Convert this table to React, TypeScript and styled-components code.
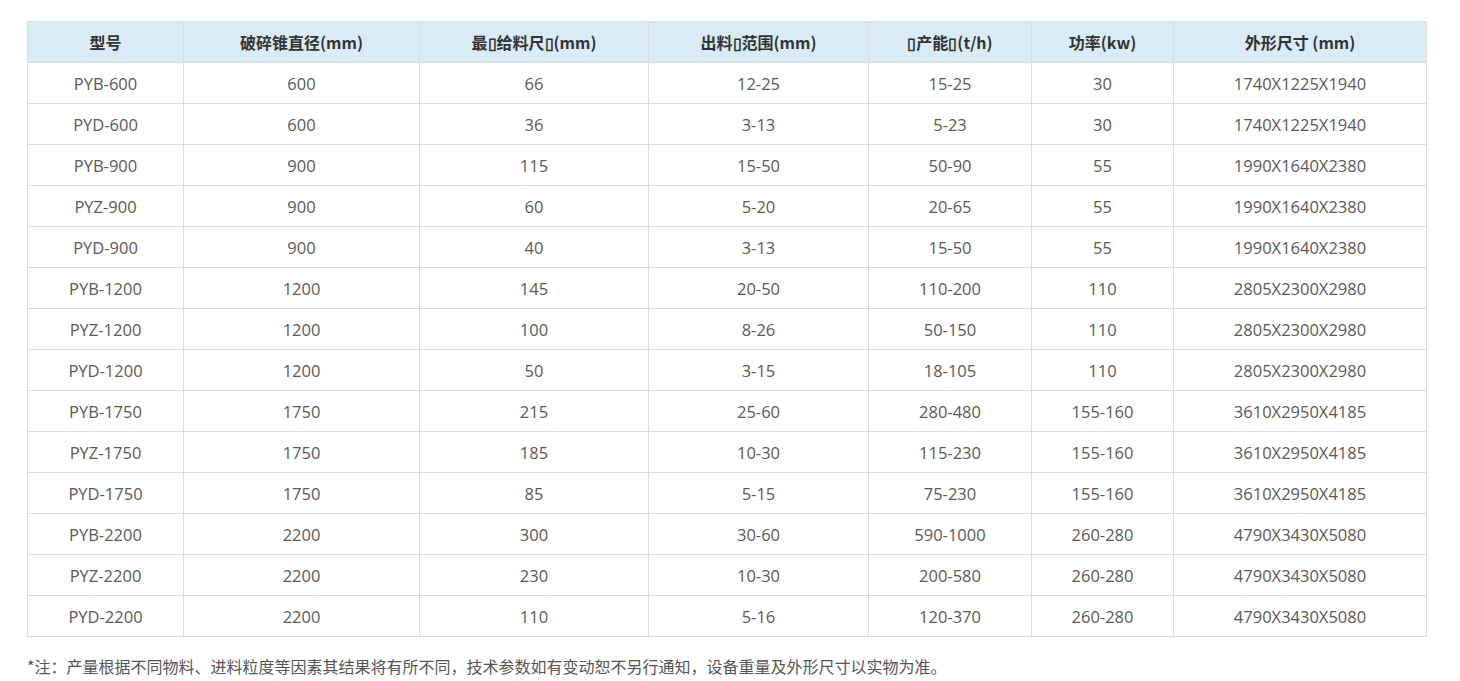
import styled, { createGlobalStyle } from 'styled-components';

const GlobalStyle = createGlobalStyle`
  html, body {
    margin: 0;
    padding: 0;
    background: #fff;
  }
`;

const TOFU = '\u25AF';

const columns = [
  { title: '型号', width: 156 },
  { title: '破碎锥直径(mm)', width: 236 },
  { title: `最${TOFU}给料尺${TOFU}(mm)`, width: 229 },
  { title: `出料${TOFU}范围(mm)`, width: 220 },
  { title: `${TOFU}产能${TOFU}(t/h)`, width: 163 },
  { title: '功率(kw)', width: 142 },
  { title: '外形尺寸 (mm)', width: 253 },
];

const rows = [
  ['PYB-600', '600', '66', '12-25', '15-25', '30', '1740X1225X1940'],
  ['PYD-600', '600', '36', '3-13', '5-23', '30', '1740X1225X1940'],
  ['PYB-900', '900', '115', '15-50', '50-90', '55', '1990X1640X2380'],
  ['PYZ-900', '900', '60', '5-20', '20-65', '55', '1990X1640X2380'],
  ['PYD-900', '900', '40', '3-13', '15-50', '55', '1990X1640X2380'],
  ['PYB-1200', '1200', '145', '20-50', '110-200', '110', '2805X2300X2980'],
  ['PYZ-1200', '1200', '100', '8-26', '50-150', '110', '2805X2300X2980'],
  ['PYD-1200', '1200', '50', '3-15', '18-105', '110', '2805X2300X2980'],
  ['PYB-1750', '1750', '215', '25-60', '280-480', '155-160', '3610X2950X4185'],
  ['PYZ-1750', '1750', '185', '10-30', '115-230', '155-160', '3610X2950X4185'],
  ['PYD-1750', '1750', '85', '5-15', '75-230', '155-160', '3610X2950X4185'],
  ['PYB-2200', '2200', '300', '30-60', '590-1000', '260-280', '4790X3430X5080'],
  ['PYZ-2200', '2200', '230', '10-30', '200-580', '260-280', '4790X3430X5080'],
  ['PYD-2200', '2200', '110', '5-16', '120-370', '260-280', '4790X3430X5080'],
];

export default function App() {
  return (
    <Page>
      <GlobalStyle />
      <Table>
        <colgroup>
          {columns.map((c) => (
            <col key={c.title} style={{ width: c.width }} />
          ))}
        </colgroup>
        <thead>
          <tr>
            {columns.map((c) => (
              <HeadCell key={c.title}>{c.title}</HeadCell>
            ))}
          </tr>
        </thead>
        <tbody>
          {rows.map((r) => (
            <tr key={r[0]}>
              {r.map((v, i) => (
                <Cell key={i}>{v}</Cell>
              ))}
            </tr>
          ))}
        </tbody>
      </Table>
      <Note>*注：产量根据不同物料、进料粒度等因素其结果将有所不同，技术参数如有变动恕不另行通知，设备重量及外形尺寸以实物为准。</Note>
    </Page>
  );
}

/* STYLES */
const Page = styled.div`
  padding: 21px 0 0 27px;
  width: 1400px;
`;

const Table = styled.table`
  width: 1400px;
  border-collapse: collapse;
  table-layout: fixed;
`;

const HeadCell = styled.th`
  height: 40px;
  padding: 0;
  background: #d9ebf5;
  border: 1px solid #dcdcdc;
  color: #333;
  font-family: 'Noto Sans CJK SC', 'Liberation Sans', sans-serif;
  font-size: 16px;
  font-weight: 700;
  text-align: center;
  vertical-align: middle;
`;

const Cell = styled.td`
  height: 40px;
  padding: 0;
  border: 1px solid #dcdcdc;
  color: #5a5a5a;
  font-family: 'Open Sans', 'Noto Sans CJK SC', sans-serif;
  font-size: 16.5px;
  text-align: center;
  vertical-align: middle;
`;

const Note = styled.p`
  margin: 18px 0 0;
  color: #555;
  font-family: 'Noto Sans CJK SC', sans-serif;
  font-size: 16px;
  line-height: 22px;
`;
